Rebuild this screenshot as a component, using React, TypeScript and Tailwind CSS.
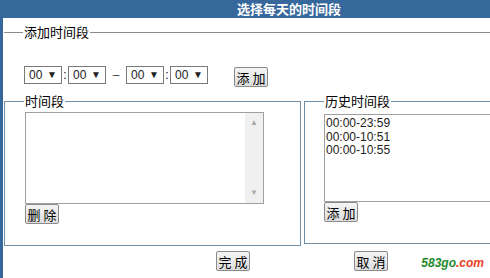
const cjk = { fontFamily: '"SimSun", "Noto Sans CJK SC", sans-serif' };

const TimeSelect = () => (
    <div className="w-[38px] h-[18px] border border-[#7a7a7a] bg-white flex items-center pl-[4px] pr-[4px] justify-between text-[12px] leading-none text-[#222]">
        <span>00</span>
        <span className="text-[10px]">▼</span>
    </div>
);

const Btn = ({ label, className = "" }: { label: string; className?: string }) => (
    <button
        className={`h-[20px] w-[34px] border border-[#8a8a8a] rounded-[2px] bg-gradient-to-b from-[#f4f4f4] to-[#dedede] text-[13px] leading-none text-black flex items-center justify-center ${className}`}
        style={cjk}
    >
        {label}
    </button>
);

export default function App() {
    return (
        <div className="w-[490px] h-[278px] overflow-hidden bg-white flex flex-col relative font-['Liberation_Sans',Arial,sans-serif]">
            <div className="h-[18px] shrink-0 bg-[#37689b] text-white font-bold text-[13px] leading-[18px] pl-[237px]" style={cjk}>
                选择每天的时间段
            </div>
            <div className="flex flex-1 min-h-0">
                <div className="w-[3px] shrink-0 bg-[#37689b]" />
                <div className="flex-1 min-w-0 flex flex-col">
                    {/* add period */}
                    <fieldset className="mt-[7px] ml-[1px] w-[600px] h-[69px] border-t border-[#8c8c8c] pl-[19px] shrink-0">
                        <legend className="px-[1px] text-[13px] leading-[14px] text-black" style={cjk}>添加时间段</legend>
                        <div className="flex items-start mt-[27px] ml-[1px]">
                            <TimeSelect />
                            <span className="w-[6px] text-center text-[12px] leading-[18px]">:</span>
                            <TimeSelect />
                            <span className="w-[20px] text-center text-[12px] leading-[18px] text-[#444]">–</span>
                            <TimeSelect />
                            <span className="w-[6px] text-center text-[12px] leading-[18px]">:</span>
                            <TimeSelect />
                            <Btn label="添 加" className="ml-[26px] mt-[1px]" />
                        </div>
                    </fieldset>

                    <div className="flex shrink-0 w-[700px]">
                        {/* periods */}
                        <fieldset className="ml-[1px] w-[297px] h-[152px] border border-[#6f8fa6] pl-[19px] shrink-0">
                            <legend className="px-[1px] text-[13px] leading-[14px] text-black" style={cjk}>时间段</legend>
                            <div className="mt-[4px] ml-[1px] w-[239px] h-[92px] border border-[#a0a0a0] bg-white flex justify-end">
                                <div className="w-[18px] h-full bg-[#f0f0f0] flex flex-col items-center justify-between py-[6px] text-[8px] leading-none text-[#a8a8a8]">
                                    <span>▲</span>
                                    <span>▼</span>
                                </div>
                            </div>
                            <Btn label="删 除" className="ml-[1px]" />
                        </fieldset>

                        {/* history */}
                        <fieldset className="ml-[3px] w-[360px] h-[150px] border border-[#6f8fa6] pl-[19px] shrink-0">
                            <legend className="px-[1px] text-[13px] leading-[14px] text-black" style={cjk}>历史时间段</legend>
                            <div className="mt-[6px] w-[300px] h-[88px] border border-[#a0a0a0] bg-white pl-[1px] pt-[2px] text-[12px] leading-[13.5px] text-[#222]">
                                <div>00:00-23:59</div>
                                <div>00:00-10:51</div>
                                <div>00:00-10:55</div>
                            </div>
                            <Btn label="添 加" />
                        </fieldset>
                    </div>

                    <div className="flex mt-[5px] shrink-0">
                        <Btn label="完 成" className="ml-[213px]" />
                        <Btn label="取 消" className="ml-[104px]" />
                    </div>
                </div>
            </div>
            <div className="absolute right-[6px] bottom-[9px] text-[12px] font-bold italic leading-none">
                <span className="text-[#1f8a2a]">583go</span>
                <span className="text-[#e8401c]">.com</span>
            </div>
        </div>
    );
}
